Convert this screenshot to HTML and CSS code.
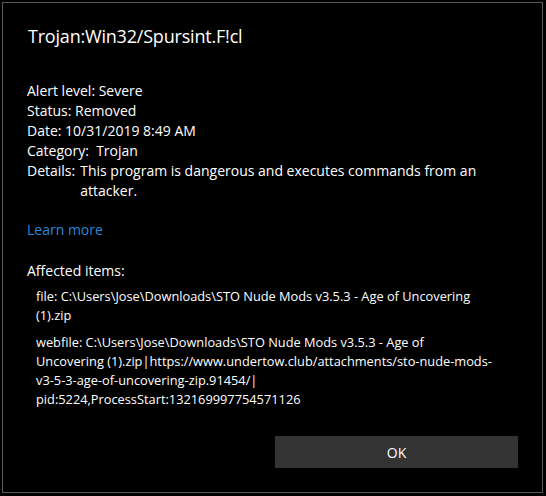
FILE: index.html
```html
<!DOCTYPE html>
<html>
<head>
<meta charset="utf-8">
<link rel="stylesheet" href="styles.css">
</head>
<body>
<div class="dialog">
  <h1 class="title">Trojan:Win32/Spursint.F!cl</h1>
  <div class="info">
    <div class="row">Alert level: Severe</div>
    <div class="row">Status: Removed</div>
    <div class="row">Date: 10/31/2019 8:49 AM</div>
    <div class="row">Category:&nbsp; Trojan</div>
    <div class="row details"><span class="label">Details:</span><span class="value">This program is dangerous and executes commands from an attacker.</span></div>
  </div>
  <a class="learn">Learn more</a>
  <div class="affected">Affected items:</div>
  <div class="items">
    <div class="item">file: C:\Users\Jose\Downloads\STO Nude Mods v3.5.3 - Age of Uncovering<br>(1).zip</div>
    <div class="item">webfile: C:\Users\Jose\Downloads\STO Nude Mods v3.5.3 - Age of<br>Uncovering (1).zip|https://www.undertow.club/attachments/sto-nude-mods-<br>v3-5-3-age-of-uncovering-zip.91454/|<br>pid:5224,ProcessStart:132169997754571126</div>
  </div>
  <div class="footer">
    <button class="ok">OK</button>
  </div>
</div>
</body>
</html>
```
FILE: styles.css
```css
html, body {
  margin: 0;
  padding: 0;
  background: #000;
}
body {
  padding: 2px;
  width: 546px;
  height: 496px;
  box-sizing: border-box;
  font-family: "Open Sans", "Noto Sans", sans-serif;
  color: #fff;
}
.dialog {
  width: 541px;
  height: 491px;
  box-sizing: border-box;
  border: 1px solid #5a5a5a;
  background: #000;
  padding: 0 24px 0 24px;
  display: flex;
  flex-direction: column;
}
.title {
  margin: 20px 0 0 1px;
  font-size: 18px;
  font-weight: 400;
  line-height: 26px;
  letter-spacing: -0.2px;
}
.info {
  margin-top: 32px;
  font-size: 14px;
  line-height: 20px;
}
.details {
  display: flex;
}
.label {
  flex: none;
  margin-right: 5px;
}
.value {
  width: 420px;
}
.learn {
  margin-top: 19px;
  font-size: 14px;
  line-height: 20px;
  color: #2b88d8;
}
.affected {
  margin-top: 21px;
  font-size: 14px;
  line-height: 20px;
}
.items {
  margin-top: 6px;
  padding-left: 9px;
  display: flex;
  flex-direction: column;
  gap: 8px;
  font-size: 12.8px;
  line-height: 19px;
  white-space: nowrap;
}
.footer {
  margin-top: auto;
  margin-bottom: 24px;
  display: flex;
  justify-content: flex-end;
}
.ok {
  width: 243px;
  height: 32px;
  border: none;
  background: #333;
  color: #fff;
  font-family: "Open Sans", "Noto Sans", sans-serif;
  font-size: 14px;
}
```
